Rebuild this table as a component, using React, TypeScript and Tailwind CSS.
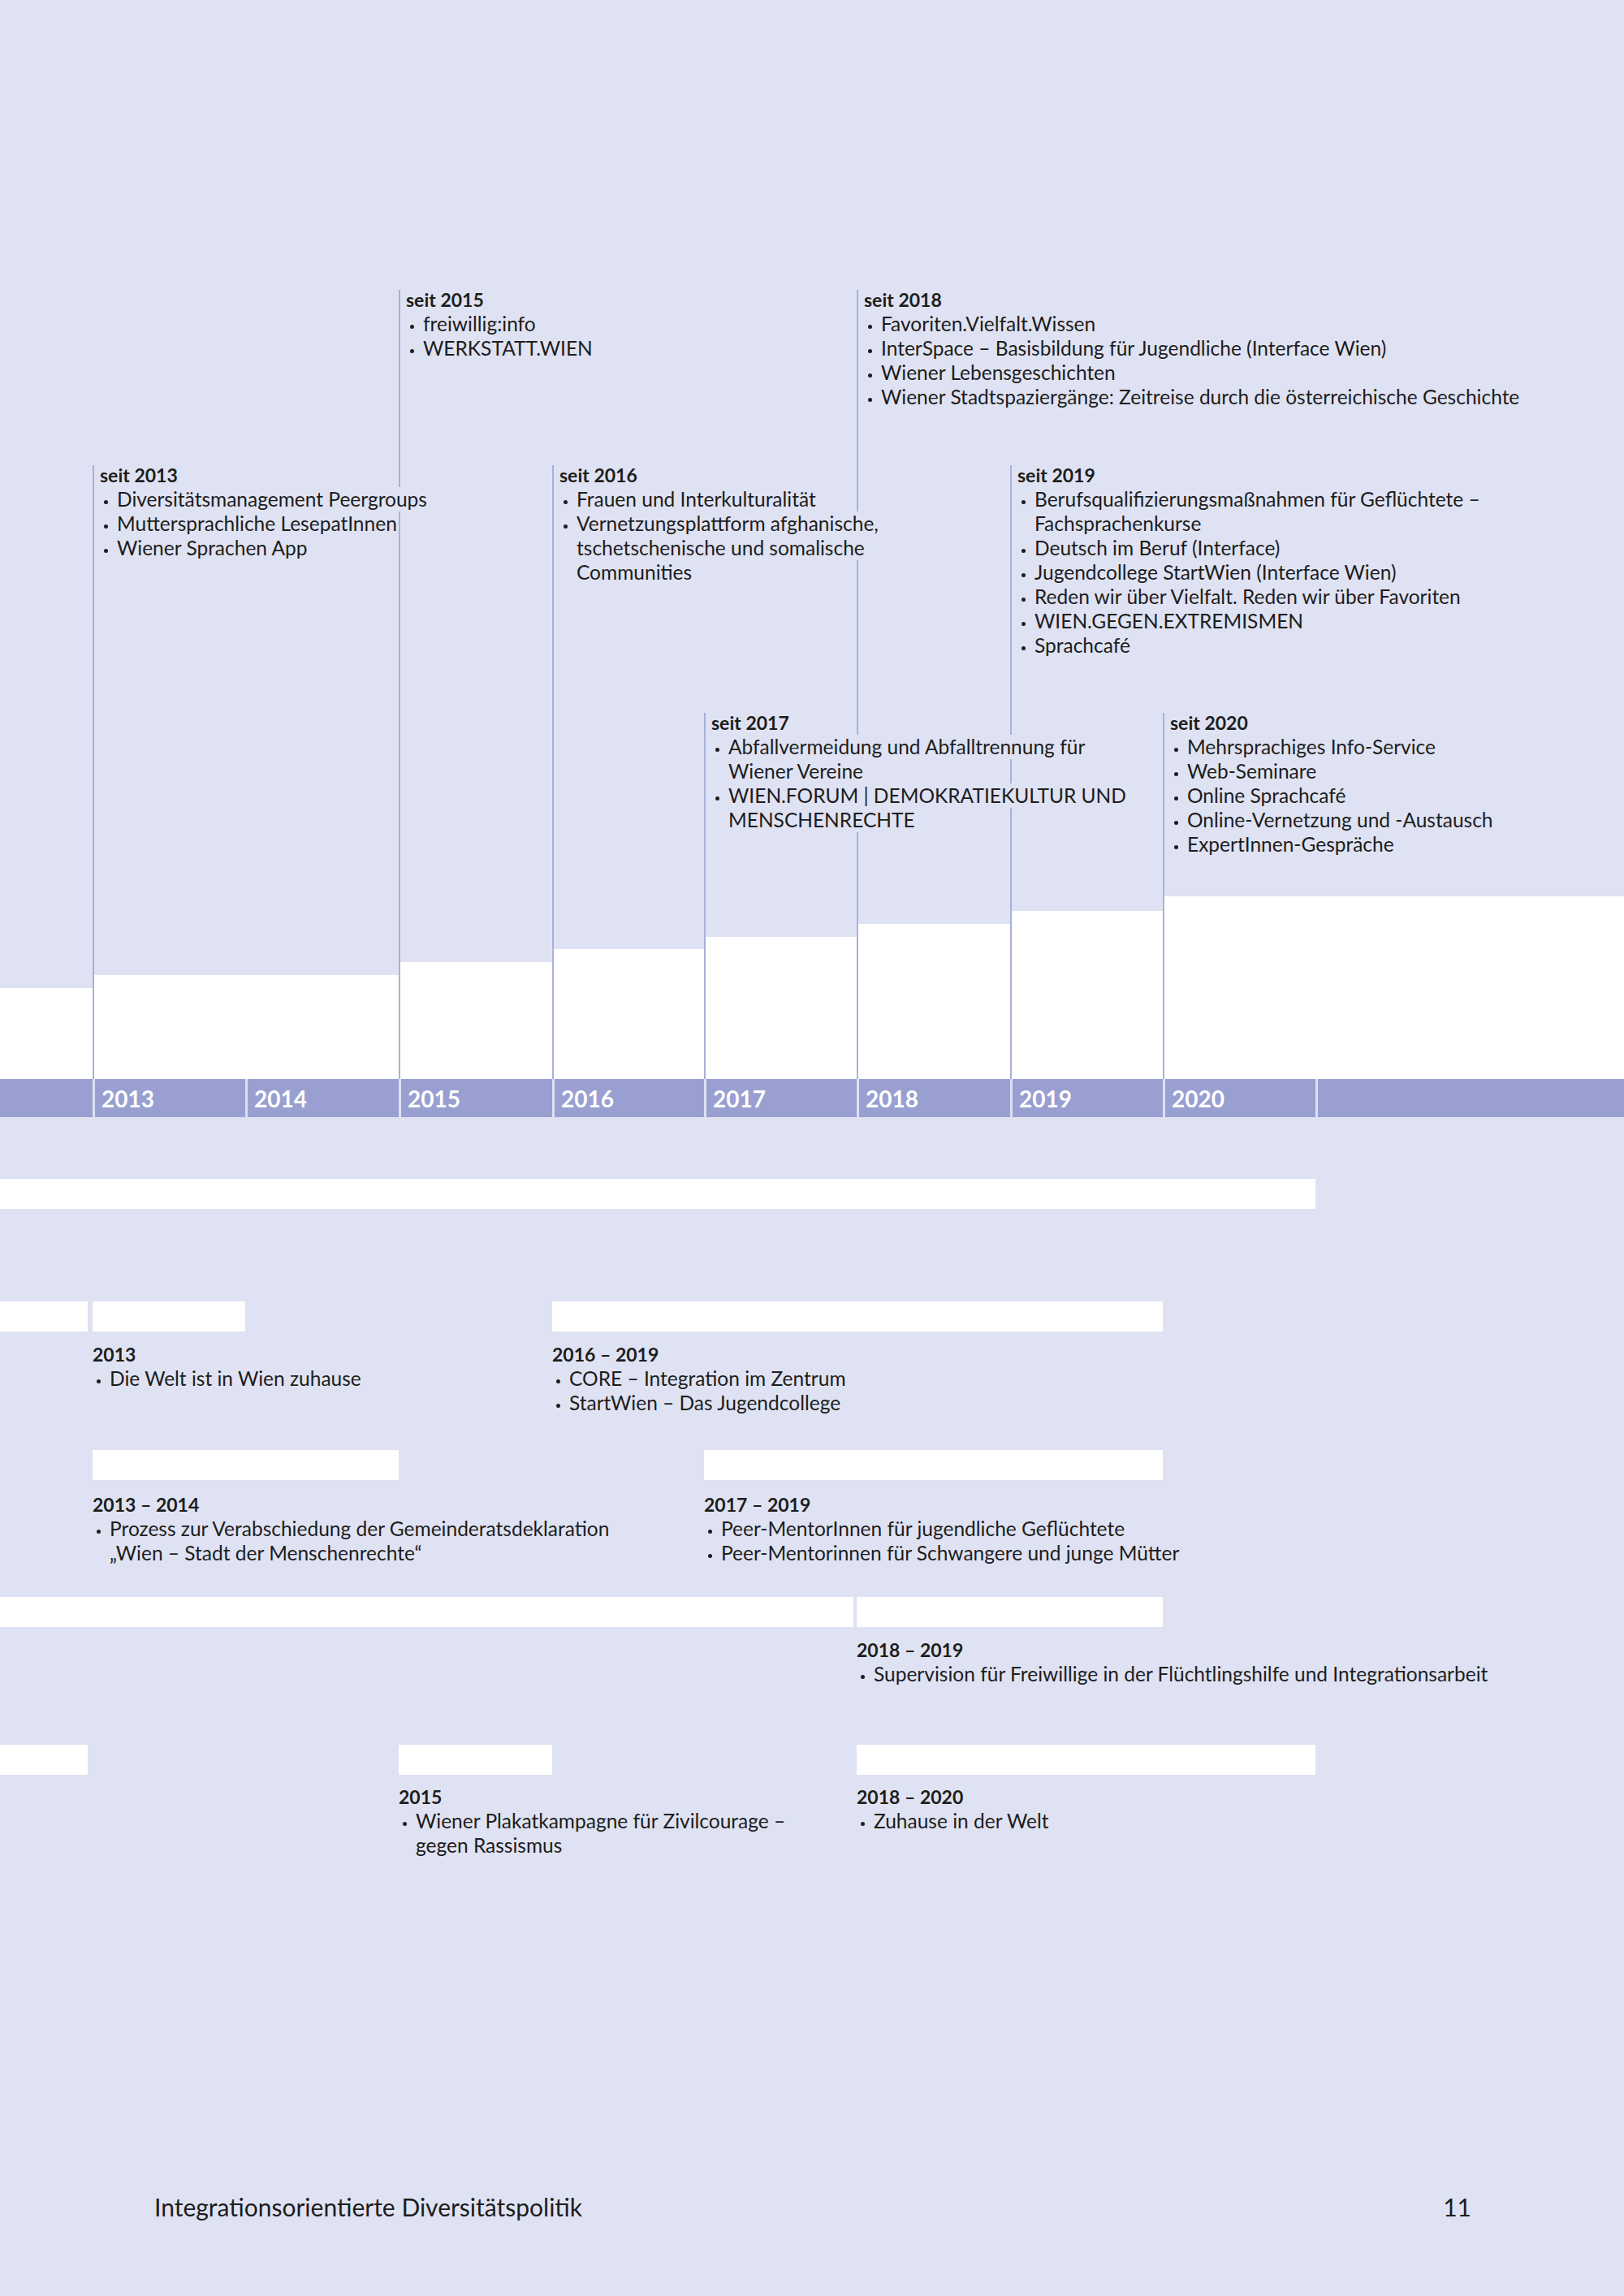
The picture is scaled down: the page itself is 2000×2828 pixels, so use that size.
import React from "react"

const COLS = "grid grid-cols-[114px_188px_189px_189px_187px_188px_189px_188px_188px_1fr]"

type Entry = { title: string; items: string[][] }

const seit2013: Entry = {
  title: "seit 2013",
  items: [["Diversitätsmanagement Peergroups"], ["Muttersprachliche LesepatInnen"], ["Wiener Sprachen App"]],
}
const seit2015: Entry = { title: "seit 2015", items: [["freiwillig:info"], ["WERKSTATT.WIEN"]] }
const seit2016: Entry = {
  title: "seit 2016",
  items: [
    ["Frauen und Interkulturalität"],
    ["Vernetzungsplattform afghanische,", "tschetschenische und somalische", "Communities"],
  ],
}
const seit2017: Entry = {
  title: "seit 2017",
  items: [
    ["Abfallvermeidung und Abfalltrennung für", "Wiener Vereine"],
    ["WIEN.FORUM | DEMOKRATIEKULTUR UND", "MENSCHENRECHTE"],
  ],
}
const seit2018: Entry = {
  title: "seit 2018",
  items: [
    ["Favoriten.Vielfalt.Wissen"],
    ["InterSpace – Basisbildung für Jugendliche (Interface Wien)"],
    ["Wiener Lebensgeschichten"],
    ["Wiener Stadtspaziergänge: Zeitreise durch die österreichische Geschichte"],
  ],
}
const seit2019: Entry = {
  title: "seit 2019",
  items: [
    ["Berufsqualifizierungsmaßnahmen für Geflüchtete –", "Fachsprachenkurse"],
    ["Deutsch im Beruf (Interface)"],
    ["Jugendcollege StartWien (Interface Wien)"],
    ["Reden wir über Vielfalt. Reden wir über Favoriten"],
    ["WIEN.GEGEN.EXTREMISMEN"],
    ["Sprachcafé"],
  ],
}
const seit2020: Entry = {
  title: "seit 2020",
  items: [
    ["Mehrsprachiges Info-Service"],
    ["Web-Seminare"],
    ["Online Sprachcafé"],
    ["Online-Vernetzung und -Austausch"],
    ["ExpertInnen-Gespräche"],
  ],
}

// top chart columns: offset of the label line, height of the white step
const topCols: { off?: string; step: string; entry?: Entry }[] = [
  { step: "h-[112px]" },
  { off: "h-[216px]", step: "h-[128px]", entry: seit2013 },
  { step: "h-[128px]" },
  { step: "h-[144px]", entry: seit2015 },
  { off: "h-[216px]", step: "h-[160px]", entry: seit2016 },
  { off: "h-[521px]", step: "h-[175px]", entry: seit2017 },
  { step: "h-[191px]", entry: seit2018 },
  { off: "h-[216px]", step: "h-[207px]", entry: seit2019 },
  { off: "h-[521px]", step: "h-[225px]", entry: seit2020 },
  { step: "h-[225px]" },
]

const years = ["2013", "2014", "2015", "2016", "2017", "2018", "2019", "2020", ""]

function Item({ lines }: { lines: string[] }) {
  return (
    <div>
      {lines.map((t, i) => (
        <div key={i} className="relative z-10 flex w-fit items-center whitespace-nowrap bg-[#dfe2f3] pr-[2px]">
          <span className="flex w-[21px] shrink-0 pl-[5px] pt-[6px]">
            {i === 0 && <span className="h-[5px] w-[5px] rounded-full bg-[#1d1d1b]" />}
          </span>
          <span>{t}</span>
        </div>
      ))}
    </div>
  )
}

function Label({ entry, className = "" }: { entry: Entry; className?: string }) {
  return (
    <div className={"text-[24.5px] leading-[30px] text-[#1d1d1b] " + className}>
      <div className="relative z-10 w-fit whitespace-nowrap bg-[#dfe2f3] pr-[2px] text-[23px] font-bold">{entry.title}</div>
      {entry.items.map((lines, i) => (
        <Item key={i} lines={lines} />
      ))}
    </div>
  )
}

const Bar = ({ className }: { className: string }) => <div className={"h-[37px] bg-white " + className} />

export default function App() {
  return (
    <div className="flex h-[2828px] w-[2000px] flex-col bg-[#dfe2f3] pt-[357px] font-[Lato,sans-serif] text-[#1d1d1b]">
      {/* Timeline: labels and steps */}
      <div className={COLS + " h-[972px]"}>
        {topCols.map((c, i) =>
          c.entry ? (
            <div key={i} className="flex flex-col">
              {c.off && <div className={c.off} />}
              <div className="flex flex-1 flex-col border-l-2 border-[#a9b0dc]">
                <Label entry={c.entry} className="-mt-[3px] pl-[7px]" />
                <div className="flex-1" />
                <div className={"bg-white " + c.step} />
              </div>
            </div>
          ) : (
            <div key={i} className="flex flex-col justify-end">
              <div className={"bg-white " + c.step} />
            </div>
          )
        )}
      </div>

      {/* Year bar */}
      <div className={COLS + " h-[47px] bg-[#99a0d1]"}>
        <div />
        {years.map((y, i) => (
          <div key={i} className="flex items-center border-l-[3px] border-[#dde0f2] pl-[8px] text-[28px] font-bold text-white">
            {y}
          </div>
        ))}
      </div>

      <div className="h-[76px]" />

      {/* Projects */}
      <div className={COLS + " h-[151px] content-start"}>
        <Bar className="col-span-9" />
      </div>

      <div className={COLS + " h-[183px] content-start"}>
        <Bar className="col-start-1 mr-[6px]" />
        <Bar className="col-start-2" />
        <Bar className="col-span-4 col-start-5" />
        <Label
          className="col-start-2 row-start-2 mt-[13px]"
          entry={{ title: "2013", items: [["Die Welt ist in Wien zuhause"]] }}
        />
        <Label
          className="col-start-5 row-start-2 mt-[13px]"
          entry={{
            title: "2016 – 2019",
            items: [["CORE – Integration im Zentrum"], ["StartWien – Das Jugendcollege"]],
          }}
        />
      </div>

      <div className={COLS + " h-[181px] content-start"}>
        <Bar className="col-span-2 col-start-2" />
        <Bar className="col-span-3 col-start-6" />
        <Label
          className="col-start-2 row-start-2 mt-[15px]"
          entry={{
            title: "2013 – 2014",
            items: [["Prozess zur Verabschiedung der Gemeinderatsdeklaration", "„Wien – Stadt der Menschenrechte“"]],
          }}
        />
        <Label
          className="col-start-6 row-start-2 mt-[15px]"
          entry={{
            title: "2017 – 2019",
            items: [["Peer-MentorInnen für jugendliche Geflüchtete"], ["Peer-Mentorinnen für Schwangere und junge Mütter"]],
          }}
        />
      </div>

      <div className={COLS + " h-[182px] content-start"}>
        <Bar className="col-span-6 col-start-1 mr-[4px]" />
        <Bar className="col-span-2 col-start-7" />
        <Label
          className="col-start-7 row-start-2 mt-[13px]"
          entry={{
            title: "2018 – 2019",
            items: [["Supervision für Freiwillige in der Flüchtlingshilfe und Integrationsarbeit"]],
          }}
        />
      </div>

      <div className={COLS + " content-start"}>
        <Bar className="col-start-1 mr-[6px]" />
        <Bar className="col-start-4" />
        <Bar className="col-span-3 col-start-7" />
        <Label
          className="col-start-4 row-start-2 mt-[12px]"
          entry={{ title: "2015", items: [["Wiener Plakatkampagne für Zivilcourage –", "gegen Rassismus"]] }}
        />
        <Label
          className="col-start-7 row-start-2 mt-[12px]"
          entry={{ title: "2018 – 2020", items: [["Zuhause in der Welt"]] }}
        />
      </div>

      {/* Footer */}
      <div className="mt-auto flex items-center justify-between pb-[93px] pl-[190px] pr-[188px] text-[30px] leading-[34px]">
        <span>Integrationsorientierte Diversitätspolitik</span>
        <span>11</span>
      </div>
    </div>
  )
}
